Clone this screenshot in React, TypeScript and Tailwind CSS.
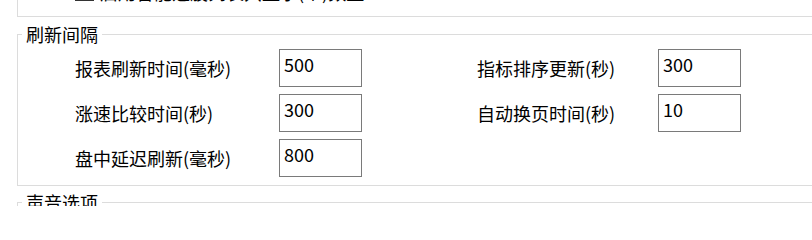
import React from 'react';

const font = { fontFamily: '"Microsoft YaHei", "Noto Sans CJK SC", sans-serif' };

interface Field {
  label: string;
  value: string;
}

const leftFields: Field[] = [
  { label: '报表刷新时间(毫秒)', value: '500' },
  { label: '涨速比较时间(秒)', value: '300' },
  { label: '盘中延迟刷新(毫秒)', value: '800' },
];

const rightFields: Field[] = [
  { label: '指标排序更新(秒)', value: '300' },
  { label: '自动换页时间(秒)', value: '10' },
];

function NumberBox({ value }: { value: string }) {
  return (
    <div className="w-[83px] h-[38px] border border-[#7a7a7a] bg-white pl-[4px] pt-[2px] text-[18px] leading-[24px] text-black">
      {value}
    </div>
  );
}

function FieldRow({ field, labelWidth }: { field: Field; labelWidth: string }) {
  return (
    <div className="flex items-center">
      <div className={`${labelWidth} text-[18px] leading-[24px] text-black`}>{field.label}</div>
      <NumberBox value={field.value} />
    </div>
  );
}

export default function App() {
  return (
    <div className="w-[812px] h-[206px] overflow-hidden bg-white text-black" style={font}>
      {/* 上一组（只露出底部） */}
      <div className="ml-[17px] w-[820px] h-[17px] border-l border-b border-[#dcdcdc] overflow-hidden">
        <div className="flex items-start ml-[57px] mt-[-18px]">
          <div className="w-[19px] h-[19px] border border-[#333333] bg-white" />
          <div className="ml-[6px] mt-[-2px] text-[18px] leading-[24px] whitespace-nowrap">启用智能选股列表只显示(个)数量</div>
        </div>
      </div>

      {/* 刷新间隔 */}
      <fieldset className="ml-[17px] mt-[5px] w-[820px] border border-[#dcdcdc] pl-[4px] pb-[8px]">
        <legend className="px-[4px] text-[18px] leading-[24px]">刷新间隔</legend>
        <div className="flex ml-[53px] mt-[3px]">
          <div className="flex flex-col gap-[7px]">
            {leftFields.map((f) => (
              <FieldRow key={f.label} field={f} labelWidth="w-[204px]" />
            ))}
          </div>
          <div className="flex flex-col gap-[7px] ml-[115px]">
            {rightFields.map((f) => (
              <FieldRow key={f.label} field={f} labelWidth="w-[181px]" />
            ))}
          </div>
        </div>
      </fieldset>

      {/* 声音选项 */}
      <fieldset className="ml-[17px] mt-[4px] w-[820px] h-[40px] border border-[#dcdcdc] pl-[4px]">
        <legend className="px-[4px] text-[18px] leading-[24px]">声音选项</legend>
      </fieldset>
    </div>
  );
}
